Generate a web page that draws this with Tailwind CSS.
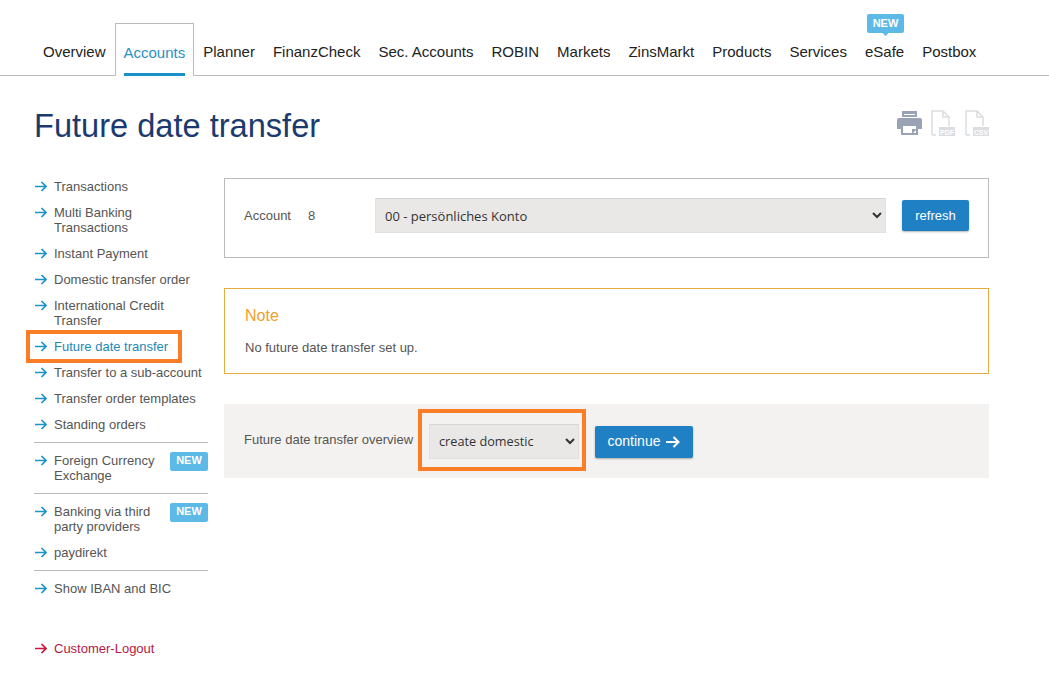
<!DOCTYPE html>
<html lang="en">
<head>
<meta charset="UTF-8">
<title>Future date transfer</title>
<script src="https://cdn.jsdelivr.net/npm/@tailwindcss/browser@4"></script>
</head>
<body class="bg-white font-['Liberation_Sans',Arial,sans-serif] text-[#555] relative h-[692px] overflow-hidden">

<!-- top navigation -->
<nav class="h-[76px] border-b border-[#bbb] pl-[34px] flex items-end text-[15px] text-[#222]">
  <a class="h-[52px] px-[9px] pt-[18px]">Overview</a>
  <a class="relative h-[53px] -mb-px px-[8px] pt-[18px] border border-b-0 border-[#bbb] bg-white text-[#2b8fc4]">Accounts<span class="absolute left-[8px] right-[8px] bottom-0 h-[3px] bg-[#1a90c8]"></span></a>
  <a class="h-[52px] pl-[9px] pr-[9px] pt-[18px]">Planner</a>
  <a class="h-[52px] px-[9px] pt-[18px]">FinanzCheck</a>
  <a class="h-[52px] px-[9px] pt-[18px]">Sec. Accounts</a>
  <a class="h-[52px] px-[9px] pt-[18px]">ROBIN</a>
  <a class="h-[52px] px-[9px] pt-[18px]">Markets</a>
  <a class="h-[52px] px-[9px] pt-[18px]">ZinsMarkt</a>
  <a class="h-[52px] px-[9px] pt-[18px]">Products</a>
  <a class="h-[52px] px-[9px] pt-[18px]">Services</a>
  <a class="relative h-[52px] px-[9px] pt-[18px]">eSafe
    <span class="absolute left-[11px] -top-[9px] w-[37px] h-[19px] bg-[#5db9e6] rounded-[2px] text-white text-[11px] font-bold leading-[18px] text-center">NEW<span class="absolute left-[16px] top-[16px] w-[5px] h-[5px] -z-10 rotate-45 bg-[#5db9e6]"></span></span>
  </a>
  <a class="h-[52px] px-[9px] pt-[18px]">Postbox</a>
</nav>

<!-- page title -->
<header class="h-[102px] pl-[34px] pr-[60px] flex justify-between">
  <h1 class="mt-[30px] text-[32.6px] leading-[40px] text-[#1b3a6f]">Future date transfer</h1>
  <div class="mt-[34px] flex items-start">
    <svg class="w-[25px] h-[26px]" viewBox="0 0 25 26"><path fill="#9aa3b5" d="M5 1h15v6H5zM2 8h21a2 2 0 0 1 2 2v9h-4v6H4v-6H0v-9a2 2 0 0 1 2-2z"/><path fill="#fff" d="M7 4h11v1H7zM6 16h13v7H6z"/><path fill="#9aa3b5" d="M15 19h4v1l-3 3h-1z"/></svg>
    <svg class="ml-[9px] w-[24px] h-[26px]" viewBox="0 0 24 26"><path fill="none" stroke="#dcdde0" stroke-width="1.5" d="M1 25V1h11l6 6v9M12 1v6h6M1 25h4"/><rect x="8" y="17" width="16" height="9" fill="#dcdde0"/><text x="16" y="24.5" text-anchor="middle" font-size="7" font-weight="700" fill="#fff">PDF</text></svg>
    <svg class="ml-[10px] w-[24px] h-[26px]" viewBox="0 0 24 26"><path fill="none" stroke="#dcdde0" stroke-width="1.5" d="M1 25V1h11l6 6v9M12 1v6h6M1 25h4"/><rect x="8" y="17" width="16" height="9" fill="#dcdde0"/><text x="16" y="24.5" text-anchor="middle" font-size="7" font-weight="700" fill="#fff">CSV</text></svg>
  </div>
</header>

<div class="flex pl-[34px]">
  <!-- side menu -->
  <aside class="w-[174px] text-[13px] leading-[15px] pt-[1px]">
    <ul class="flex flex-col gap-[11px]">
      <li class="flex"><svg class="w-[13px] h-[15px] mr-[7px] shrink-0" viewBox="0 0 13 15"><path fill="none" stroke="#1f93c6" stroke-width="1.7" d="M1 7.5h11M7.5 3l4.5 4.5L7.5 12"/></svg>Transactions</li>
      <li class="flex"><svg class="w-[13px] h-[15px] mr-[7px] shrink-0" viewBox="0 0 13 15"><path fill="none" stroke="#1f93c6" stroke-width="1.7" d="M1 7.5h11M7.5 3l4.5 4.5L7.5 12"/></svg><span>Multi Banking<br>Transactions</span></li>
      <li class="flex"><svg class="w-[13px] h-[15px] mr-[7px] shrink-0" viewBox="0 0 13 15"><path fill="none" stroke="#1f93c6" stroke-width="1.7" d="M1 7.5h11M7.5 3l4.5 4.5L7.5 12"/></svg>Instant Payment</li>
      <li class="flex"><svg class="w-[13px] h-[15px] mr-[7px] shrink-0" viewBox="0 0 13 15"><path fill="none" stroke="#1f93c6" stroke-width="1.7" d="M1 7.5h11M7.5 3l4.5 4.5L7.5 12"/></svg>Domestic transfer order</li>
      <li class="flex"><svg class="w-[13px] h-[15px] mr-[7px] shrink-0" viewBox="0 0 13 15"><path fill="none" stroke="#1f93c6" stroke-width="1.7" d="M1 7.5h11M7.5 3l4.5 4.5L7.5 12"/></svg><span>International Credit<br>Transfer</span></li>
      <li class="flex text-[#2288b8]"><svg class="w-[13px] h-[15px] mr-[7px] shrink-0" viewBox="0 0 13 15"><path fill="none" stroke="#1f93c6" stroke-width="1.7" d="M1 7.5h11M7.5 3l4.5 4.5L7.5 12"/></svg>Future date transfer</li>
      <li class="flex"><svg class="w-[13px] h-[15px] mr-[7px] shrink-0" viewBox="0 0 13 15"><path fill="none" stroke="#1f93c6" stroke-width="1.7" d="M1 7.5h11M7.5 3l4.5 4.5L7.5 12"/></svg>Transfer to a sub-account</li>
      <li class="flex"><svg class="w-[13px] h-[15px] mr-[7px] shrink-0" viewBox="0 0 13 15"><path fill="none" stroke="#1f93c6" stroke-width="1.7" d="M1 7.5h11M7.5 3l4.5 4.5L7.5 12"/></svg>Transfer order templates</li>
      <li class="flex"><svg class="w-[13px] h-[15px] mr-[7px] shrink-0" viewBox="0 0 13 15"><path fill="none" stroke="#1f93c6" stroke-width="1.7" d="M1 7.5h11M7.5 3l4.5 4.5L7.5 12"/></svg>Standing orders</li>
    </ul>
    <ul class="mt-[10px] pt-[10px] border-t border-[#bbb]">
      <li class="flex"><svg class="w-[13px] h-[15px] mr-[7px] shrink-0" viewBox="0 0 13 15"><path fill="none" stroke="#1f93c6" stroke-width="1.7" d="M1 7.5h11M7.5 3l4.5 4.5L7.5 12"/></svg><span>Foreign Currency<br>Exchange</span>
        <span class="ml-auto -mt-[1px] h-[19px] w-[38px] bg-[#5db9e6] rounded-[2px] text-white text-[11px] font-bold leading-[17px] text-center">NEW</span></li>
    </ul>
    <ul class="mt-[10px] pt-[10px] border-t border-[#bbb] flex flex-col gap-[11px]">
      <li class="flex"><svg class="w-[13px] h-[15px] mr-[7px] shrink-0" viewBox="0 0 13 15"><path fill="none" stroke="#1f93c6" stroke-width="1.7" d="M1 7.5h11M7.5 3l4.5 4.5L7.5 12"/></svg><span>Banking via third<br>party providers</span>
        <span class="ml-auto -mt-[1px] h-[19px] w-[38px] bg-[#5db9e6] rounded-[2px] text-white text-[11px] font-bold leading-[17px] text-center">NEW</span></li>
      <li class="flex"><svg class="w-[13px] h-[15px] mr-[7px] shrink-0" viewBox="0 0 13 15"><path fill="none" stroke="#1f93c6" stroke-width="1.7" d="M1 7.5h11M7.5 3l4.5 4.5L7.5 12"/></svg>paydirekt</li>
    </ul>
    <ul class="mt-[10px] pt-[10px] border-t border-[#bbb]">
      <li class="flex"><svg class="w-[13px] h-[15px] mr-[7px] shrink-0" viewBox="0 0 13 15"><path fill="none" stroke="#1f93c6" stroke-width="1.7" d="M1 7.5h11M7.5 3l4.5 4.5L7.5 12"/></svg>Show IBAN and BIC</li>
    </ul>
    <div class="mt-[45px] flex text-[#b5193f]"><svg class="w-[13px] h-[15px] mr-[7px] shrink-0" viewBox="0 0 13 15"><path fill="none" stroke="#c8163f" stroke-width="1.7" d="M1 7.5h11M7.5 3l4.5 4.5L7.5 12"/></svg>Customer-Logout</div>
  </aside>

  <!-- main column -->
  <main class="ml-[16px] w-[765px] text-[13px]">
    <section class="h-[80px] border border-[#bbb] flex items-start pt-[19px] pl-[19px] pr-[19px]">
      <span class="w-[64px] mt-[8px]">Account</span>
      <span class="w-[67px] mt-[8px]">8</span>
      <select class="w-[511px] h-[35px] pl-[5px] bg-[#e9e8e6] border border-[#e2e1df] border-t-[#d6d5d3] text-[#333] text-[13px] font-['Open_Sans',sans-serif]"><option>00 - persönliches Konto</option></select>
      <button class="ml-[16px] mt-[2px] w-[67px] h-[31px] pt-px bg-[#1f80c4] rounded-[2px] text-white text-[13px] shadow-[0_1px_2px_rgba(0,0,0,.3)]">refresh</button>
    </section>

    <section class="mt-[30px] h-[86px] border border-[#e8ac3c] pl-[20px] pt-[17px]">
      <h2 class="text-[16px] leading-[20px] text-[#ee9f2c]">Note</h2>
      <p class="mt-[14px] leading-[15px]">No future date transfer set up.</p>
    </section>

    <section class="mt-[30px] h-[74px] bg-[#f3f2f0] flex items-center pl-[20px]">
      <span class="w-[185px] -mt-[2px]">Future date transfer overview</span>
      <select class="w-[150px] h-[35px] pl-[5px] bg-[#e9e8e6] border border-[#e2e1df] border-t-[#d6d5d3] text-[#333] text-[12.7px] font-['Open_Sans',sans-serif]"><option>create domestic</option></select>
      <button class="ml-[16px] mt-[1px] w-[98px] h-[32px] bg-[#1f80c4] rounded-[2px] text-white text-[14px] shadow-[0_1px_2px_rgba(0,0,0,.3)] flex items-center justify-center gap-[6px]">continue<svg class="w-[14px] h-[12px]" viewBox="0 0 14 12"><path fill="none" stroke="#fff" stroke-width="2" d="M0 6h12M7.5 1l5 5-5 5"/></svg></button>
    </section>
  </main>
</div>

<!-- orange annotation frames -->
<div class="absolute left-[26px] top-[330px] w-[156px] h-[33px] border-[4px] border-[#fb7e26]"></div>
<div class="absolute left-[418px] top-[409px] w-[168px] h-[62px] border-[4px] border-[#fb7e26]"></div>
</body>
</html>
